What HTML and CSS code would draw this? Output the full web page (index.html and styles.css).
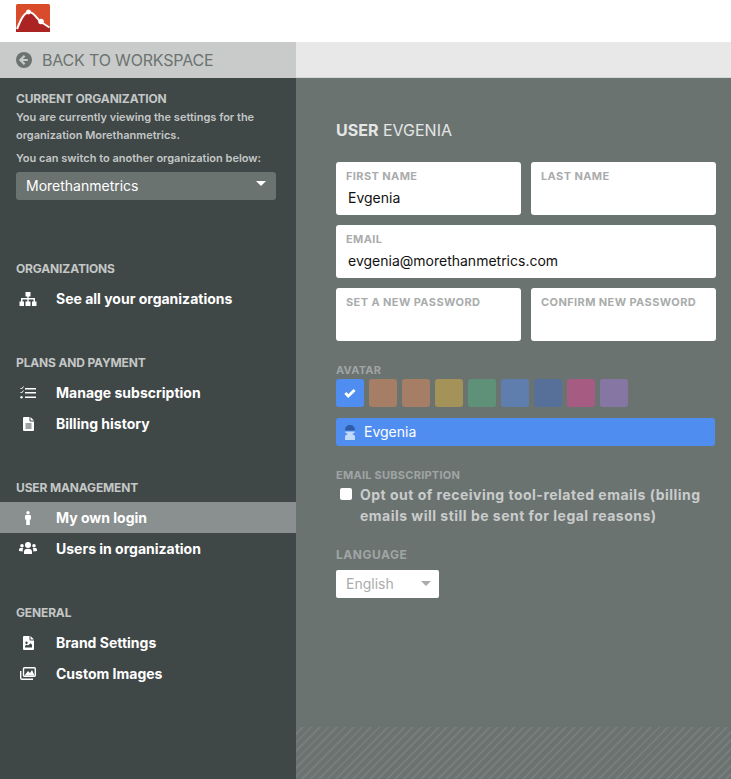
FILE: index.html
```html
<!DOCTYPE html>
<html lang="en">
<head>
<meta charset="utf-8">
<title>User settings</title>
<link rel="stylesheet" href="styles.css">
</head>
<body>
<header class="topbar">
  <svg class="logo" viewBox="0 0 34 28" width="34" height="28">
    <rect width="34" height="28" rx="1.5" fill="#d84c2c"/>
    <path d="M0 28V25C4 18 7 9 13 8C18 8 21 15 25 18L34 24V28Z" fill="#ac2323"/>
    <path d="M1 25C4 18 7 9 13 8C18 8 21 15 25 18L33.500 23.500" fill="none" stroke="#fff" stroke-width="2"/>
    <circle cx="12.5" cy="8" r="2.4" fill="#fff"/>
    <circle cx="25" cy="17.5" r="2.8" fill="#fff"/>
  </svg>
</header>
<div class="layout">
  <aside class="sidebar">
    <a class="back">
      <svg viewBox="0 0 16 16" width="16" height="16" class="back-icon"><circle cx="8" cy="8" r="8" fill="#6b7371"/><path d="M8.6 3.8L4.4 8l4.2 4.2M4.8 8h7" fill="none" stroke="#c9cbca" stroke-width="2.2"/></svg>
      <span>BACK TO WORKSPACE</span>
    </a>
    <section class="current">
      <h3 class="side-label">CURRENT ORGANIZATION</h3>
      <p class="note">You are currently viewing the settings for the organization Morethanmetrics.</p>
      <p class="note note-switch">You can switch to another organization below:</p>
      <div class="org-select"><span>Morethanmetrics</span><i class="org-caret"></i></div>
    </section>
    <section class="group group-first">
      <h3 class="side-label">ORGANIZATIONS</h3>
      <a class="item">
        <span class="item-icon"><svg viewBox="0 0 18 14" width="18" height="14"><path d="M6.5 0h5v4.5H9.7V6H16v3.5h1.5V14h-4.5V9.5h1.5V7.500H9.700v2h1.800V14h-5V9.500h1.800v-2H3.500v2H5V14H.5V9.500H2V6h6.300V4.500H6.500z" fill="#fff"/></svg></span>
        <span>See all your organizations</span>
      </a>
    </section>
    <section class="group">
      <h3 class="side-label">PLANS AND PAYMENT</h3>
      <a class="item">
        <span class="item-icon"><svg viewBox="0 0 16 13" width="16" height="13"><path d="M5 2h11v1.500H5zM5 6h11v1.500H5zM5 10.500h11V12H5z" fill="#fff"/><path d="M.5 2l1 1L3.500.5" fill="none" stroke="#fff" stroke-width="1"/><path d="M.5 6l1 1 2-2.500" fill="none" stroke="#fff" stroke-width="1"/><circle cx="1.500" cy="11.200" r="1.200" fill="#fff"/></svg></span>
        <span>Manage subscription</span>
      </a>
      <a class="item">
        <span class="item-icon"><svg viewBox="0 0 11 14" width="11" height="14"><path fill-rule="evenodd" d="M1 0h5.500v3.500a1 1 0 0 0 1 1H11V13a1 1 0 0 1-1 1H1a1 1 0 0 1-1-1V1a1 1 0 0 1 1-1zM2.500 6.500v1h6v-1zM2.500 8.500v1h6v-1zM2.500 10.500v1h6v-1z" fill="#fff"/><path d="M7.500 0L11 3.500H7.500z" fill="#fff"/></svg></span>
        <span>Billing history</span>
      </a>
    </section>
    <section class="group">
      <h3 class="side-label">USER MANAGEMENT</h3>
      <a class="item item-active">
        <span class="item-icon"><svg viewBox="0 0 6 14" width="6" height="14"><circle cx="3" cy="1.700" r="1.700" fill="#fff"/><path d="M1 4h4a1 1 0 0 1 1 1v3.500H4.800V14H1.200V8.500H0V5a1 1 0 0 1 1-1z" fill="#fff"/></svg></span>
        <span>My own login</span>
      </a>
      <a class="item">
        <span class="item-icon"><svg viewBox="0 0 18 13" width="18" height="13"><circle cx="9" cy="3" r="3" fill="#fff"/><circle cx="3" cy="3.800" r="1.800" fill="#fff"/><circle cx="15" cy="3.800" r="1.800" fill="#fff"/><path d="M5 12V9.500C5 7.500 7 6.800 9 6.800s4 .7 4 2.700V12z" fill="#fff"/><path d="M0 9V7.500C0 6.500 1 6 2 6h2.300C3.500 7 3.800 8 3.700 9.500zM18 9V7.500C18 6.500 17 6 16 6h-2.300c.8 1 .5 2 .6 3.500z" fill="#fff"/></svg></span>
        <span>Users in organization</span>
      </a>
    </section>
    <section class="group">
      <h3 class="side-label">GENERAL</h3>
      <a class="item">
        <span class="item-icon"><svg viewBox="0 0 11 14" width="11" height="14"><path fill-rule="evenodd" d="M1 0h5.500v3.500a1 1 0 0 0 1 1H11V13a1 1 0 0 1-1 1H1a1 1 0 0 1-1-1V1a1 1 0 0 1 1-1zM2 11.500h7V8.800L7.500 7.300 5 9.600 3.800 8.500 2 10zM3.500 5.500a1.200 1.200 0 1 0 0 2.400 1.200 1.200 0 0 0 0-2.400z" fill="#fff"/><path d="M7.500 0L11 3.500H7.500z" fill="#fff"/></svg></span>
        <span>Brand Settings</span>
      </a>
      <a class="item">
        <span class="item-icon"><svg viewBox="0 0 16 13" width="16" height="13"><rect x="3.500" y=".7" width="11.800" height="8.600" rx="1" fill="none" stroke="#fff" stroke-width="1.400"/><path d="M4.500 8.500L8 4l2 2 2-3 2.500 5.500z" fill="#fff"/><path d="M.7 4v7a1.300 1.300 0 0 0 1.300 1.300h11" fill="none" stroke="#fff" stroke-width="1.400"/></svg></span>
        <span>Custom Images</span>
      </a>
    </section>
  </aside>
  <div class="right">
    <div class="right-top"></div>
    <main class="content">
      <h1 class="title"><strong>USER</strong> EVGENIA</h1>
      <form class="form">
        <div class="field-row">
          <label class="field"><span class="field-label">FIRST NAME</span><input class="field-input" type="text" value="Evgenia"></label>
          <label class="field"><span class="field-label">LAST NAME</span><input class="field-input" type="text"></label>
        </div>
        <div class="field-row">
          <label class="field"><span class="field-label">EMAIL</span><input class="field-input" type="text" value="evgenia@morethanmetrics.com"></label>
        </div>
        <div class="field-row">
          <label class="field"><span class="field-label">SET A NEW PASSWORD</span><input class="field-input" type="password"></label>
          <label class="field"><span class="field-label">CONFIRM NEW PASSWORD</span><input class="field-input" type="password"></label>
        </div>
      </form>
      <div class="form-label avatar-label">AVATAR</div>
      <div class="swatches">
        <div class="swatch sw-blue">
          <svg viewBox="0 0 12 10" width="12" height="10"><path d="M1.300 5l3 3 6.300-6" fill="none" stroke="#fff" stroke-width="2.800"/></svg>
        </div>
        <div class="swatch sw-a"></div>
        <div class="swatch sw-a"></div>
        <div class="swatch sw-b"></div>
        <div class="swatch sw-c"></div>
        <div class="swatch sw-d"></div>
        <div class="swatch sw-e"></div>
        <div class="swatch sw-f"></div>
        <div class="swatch sw-g"></div>
      </div>
      <div class="name-bar">
        <svg viewBox="0 0 12 16" width="12" height="16"><path d="M1 6.500C1 3 3 1 6 1s5 2 5 5.500z" fill="#2f5ba8"/><path d="M1 7.500h10c0 1.500-2.500 2-2.500 2.500s2.500 1 2.500 2.500V16H1v-3.500C1 11 3.500 10.500 3.500 10S1 9 1 7.500z" fill="#c4daf9"/></svg>
        <span>Evgenia</span>
      </div>
      <div class="form-label sub-label">EMAIL SUBSCRIPTION</div>
      <label class="optout">
        <input class="check" type="checkbox">
        <span>Opt out of receiving tool-related emails (billing emails will still be sent for legal reasons)</span>
      </label>
      <div class="form-label lang-label">LANGUAGE</div>
      <div class="lang-select"><span>English</span><i class="lang-caret"></i></div>
    </main>
    <div class="hatch"></div>
  </div>
</div>
</body>
</html>
```
FILE: styles.css
```css
* { box-sizing: border-box; }
html, body { margin: 0; height: 100%; overflow: hidden; }
body {
  font-family: Inter, "Liberation Sans", sans-serif;
  display: flex;
  flex-direction: column;
  background: #6b7371;
}
.topbar { height: 42px; background: #fff; padding: 4px 16px 0; flex: none; }
.logo { display: block; }
.layout { flex: 1; display: flex; min-height: 0; }
.sidebar { width: 296px; flex: none; background: #3f4747; }
.back {
  height: 36px;
  background: #c9cbca;
  display: flex;
  align-items: center;
  padding-left: 16px;
  gap: 10px;
  color: #6b7371;
  font-size: 16px;
  letter-spacing: -.18px;
}
.back-icon { flex: none; }
.side-label {
  margin: 0;
  font-size: 12px;
  line-height: 16px;
  font-weight: 700;
  letter-spacing: -.15px;
  color: #c4c7c6;
}
.current { padding: 13px 20px 0 16px; }
.note {
  margin: 1px 0 0;
  font-size: 11px;
  line-height: 18px;
  font-weight: 600;
  color: #c4c7c6;
}
.note-switch { margin-top: 5px; white-space: nowrap; }
.org-select {
  margin-top: 5px;
  width: 260px;
  height: 28px;
  background: #6b7371;
  border-radius: 3px;
  color: #fff;
  font-size: 14px;
  padding: 0 10px 2px;
  display: flex;
  align-items: center;
  justify-content: space-between;
}
.org-caret {
  border: 5px solid transparent;
  border-top-color: #fff;
  border-bottom-width: 0;
  margin-top: -4px;
}
.group { margin-top: 41px; }
.group-first { margin-top: 61px; }
.group > .side-label { padding-left: 16px; margin-bottom: 6px; }
.item {
  height: 31px;
  display: flex;
  align-items: center;
  color: #fff;
  font-size: 14px;
  font-weight: 700;
}
.item-icon {
  width: 24px;
  margin: 0 16px;
  display: flex;
  justify-content: center;
  flex: none;
}
.item-active { background: #8a908f; }
.right { flex: 1; display: flex; flex-direction: column; min-width: 0; }
.right-top { height: 36px; background: #e8e8e8; flex: none; border-bottom: 1px solid #d6d7d7; }
.content { flex: 1; padding: 42px 15px 0 40px; }
.title {
  margin: 0 0 22px;
  font-size: 16px;
  line-height: 20px;
  font-weight: 400;
  color: #e4e6e5;
}
.title strong { font-weight: 700; }
.form { display: flex; flex-direction: column; gap: 10px; }
.field-row { display: flex; gap: 10px; }
.field {
  flex: 1;
  height: 53px;
  background: #fff;
  border-radius: 3px;
  padding: 7px 10px 0;
  display: flex;
  flex-direction: column;
}
.field-label { font-size: 11px; line-height: 14px; font-weight: 700; letter-spacing: .4px; color: #a9acab; }
.field-input {
  border: 0;
  outline: 0;
  padding: 0 2px;
  margin-top: 5px;
  height: 20px;
  font: 400 14px/20px Inter, "Liberation Sans", sans-serif;
  color: #111;
  background: transparent;
  width: 100%;
}
.form-label { font-size: 11px; line-height: 14px; font-weight: 700; letter-spacing: .25px; color: #a0a5a4; }
.avatar-label { margin-top: 22px; }
.swatches { display: flex; gap: 5px; margin-top: 2px; }
.swatch { width: 28px; height: 28px; border-radius: 3px; display: flex; align-items: center; justify-content: center; }
.sw-blue { background: #4f8ef0; }
.sw-a { background: #a67e65; }
.sw-b { background: #a39358; }
.sw-c { background: #5f9178; }
.sw-d { background: #5f7eae; }
.sw-e { background: #56709a; }
.sw-f { background: #a65c82; }
.sw-g { background: #8676a4; }
.name-bar {
  margin-top: 11px;
  height: 28px;
  background: #4f8ef0;
  border-radius: 3px;
  color: #fff;
  font-size: 14px;
  display: flex;
  align-items: center;
  gap: 8px;
  padding: 0 0 1px 8px;
  width: 379px;
}
.sub-label { margin-top: 22px; }
.optout {
  display: flex;
  margin-top: 2px;
  font-size: 14px;
  line-height: 21px;
  font-weight: 700;
  letter-spacing: .48px;
  color: #c9cccb;
  width: 379px;
}
.check {
  appearance: none;
  width: 12px;
  height: 12px;
  background: #fff;
  border-radius: 2px;
  margin: 4px 8px 0 4px;
  flex: none;
}
.lang-label { margin-top: 21px; font-size: 12px; line-height: 16px; letter-spacing: .5px; }
.lang-select {
  margin-top: 7px;
  width: 103px;
  height: 28px;
  background: #fff;
  border-radius: 2px;
  color: #a9acab;
  font-size: 14px;
  padding: 0 8px 1px 10px;
  display: flex;
  align-items: center;
  justify-content: space-between;
}
.lang-caret { border: 5px solid transparent; border-top-color: #a9acab; border-bottom-width: 0; }
.hatch {
  height: 52px;
  flex: none;
  background: repeating-linear-gradient(135deg, #6b7371 0 4px, #767d7c 4px 6px);
}
```
